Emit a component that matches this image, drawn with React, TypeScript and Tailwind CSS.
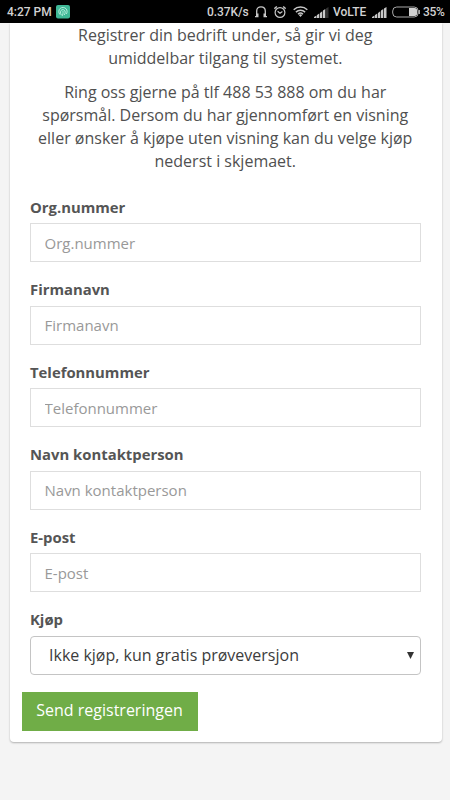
import React from "react";

const fields = [
  "Org.nummer",
  "Firmanavn",
  "Telefonnummer",
  "Navn kontaktperson",
  "E-post",
];

function Signal({ last }: { last: string }) {
  return (
    <svg className="block h-[11px] w-[15px]" viewBox="0 0 15 11">
      <path fill="#c8c8c8" d="M0 11V10l2.500-1.500V11zM3 8l2.300-1.500V11H3zM6 6l2.300-1.800V11H6zM9 3.500L11.300 2v9H9z" />
      <path fill={last} d="M12 1.500L14.500 0v11H12z" />
    </svg>
  );
}

function StatusBar() {
  return (
    <div className="flex h-[23px] items-center bg-black px-[7px] font-['Roboto',sans-serif] text-[12px] leading-[23px] font-medium text-[#d2d2d2]">
      <span className="w-[49px] shrink-0 pt-px whitespace-nowrap">4:27 PM</span>
      <svg className="h-[14px] w-[14px] shrink-0" viewBox="0 0 14 14" fill="none">
        <rect width="14" height="13.500" rx="2" fill="#3fb896" />
        <g stroke="#c4f2e4" strokeWidth="0.9" strokeLinecap="round">
          <path d="M3.600 9.200C2.300 7.500 2.600 4.700 4.200 3.400c1.700-1.400 4.500-1.200 5.900.4 1.200 1.400 1.300 3.400.5 4.800" />
          <path d="M5.100 9.600C4 7.800 4.300 5.500 5.900 4.800c1.700-.7 3.400.6 3.300 2.400 0 1-.3 1.800-.8 2.500" />
          <path d="M7 6.500c.3 1.500-.1 3-.8 4.200" />
        </g>
      </svg>
      <span className="ml-[137px] w-[42px] shrink-0 pt-px tracking-[-0.1px] whitespace-nowrap">0.37K/s</span>
      <svg className="ml-[6px] h-[12px] w-[12px] shrink-0" viewBox="0 0 12 12" fill="none">
        <path stroke="#c8c8c8" strokeWidth="1.300" d="M1.700 9V5C1.700 2.300 3.400.8 6 .8s4.300 1.500 4.300 4.200v4" />
        <path fill="#c8c8c8" d="M0 11.300V10h1V7.500h2.500v3.800zM12 11.300V10h-1V7.500H8.500v3.800z" />
      </svg>
      <svg className="ml-[7px] h-[12px] w-[12px] shrink-0" viewBox="0 0 12 12" fill="none" stroke="#c8c8c8">
        <circle cx="6" cy="6.500" r="4.900" strokeWidth="1.200" />
        <path strokeWidth="1.400" d="M.3 2.700L2.800.5M11.700 2.700L9.200.5" />
        <path strokeWidth="1.200" d="M3.600 5.200L6 7.200l2.400-1.700" />
      </svg>
      <svg className="ml-[7px] h-[11px] w-[15px] shrink-0" viewBox="0 0 15 11" fill="none" stroke="#c8c8c8" strokeWidth="1.500">
        <path d="M.7 3.800C4.500.2 10.500.2 14.300 3.800M2.900 6.100c2.600-2.400 6.600-2.400 9.200 0M5 8.200c1.400-1.300 3.600-1.300 5 0" />
        <path fill="#c8c8c8" stroke="none" d="M5.800 9L7.500 11l1.700-2c-1-.9-2.400-.9-3.400 0z" />
      </svg>
      <div className="mt-px ml-[6px] w-[15px] shrink-0">
        <Signal last="#333" />
      </div>
      <span className="ml-[4px] w-[33px] shrink-0 pt-px whitespace-nowrap">VoLTE</span>
      <div className="mt-px ml-[6px] w-[15px] shrink-0">
        <Signal last="#c8c8c8" />
      </div>
      <svg className="ml-[5px] h-[12px] w-[28px] shrink-0" viewBox="0 0 28 12" fill="none">
        <rect x=".7" y="1" width="25.500" height="10" rx="4" stroke="#a8a8a8" />
        <path fill="#d2d2d2" d="M17 2h5.500A2.700 2.700 0 0 1 25.200 4.700v2.600a2.700 2.700 0 0 1-2.700 2.700H17z" />
        <path fill="#a8a8a8" d="M26.500 4H28v4h-1.500z" />
      </svg>
      <span className="ml-[3px] pt-px tracking-[-0.3px] whitespace-nowrap">35%</span>
    </div>
  );
}

function Label({ text }: { text: string }) {
  return (
    <label className="block h-[27.500px] text-[14.850px] leading-[22px] font-bold text-[#555]">
      {text}
    </label>
  );
}

function Field({ label }: { label: string }) {
  return (
    <div className="mb-[16px]">
      <Label text={label} />
      <input
        className="block h-[39px] w-full border border-[#dedede] bg-white px-[13.500px] text-[15px] text-[#777] placeholder:text-[#999] placeholder:opacity-100"
        placeholder={label}
      />
    </div>
  );
}

function App() {
  return (
    <div className="h-[800px] overflow-hidden bg-[#f4f4f4] font-['Open_Sans',sans-serif]">
      <StatusBar />
      <div className="mr-[8.500px] ml-[10px] h-[719px] rounded-b-[4px] bg-white pt-px pr-[21px] pl-[20px] shadow-[0_1px_2px_rgba(0,0,0,0.28)]">
        <div className="text-center text-[16px] leading-[23px] whitespace-nowrap text-[#505050]">
          <p>
            Registrer din bedrift under, så gir vi deg
            <br />
            umiddelbar tilgang til systemet.
          </p>
          <p className="mt-[11px]">
            Ring oss gjerne på tlf 488 53 888 om du har
            <br />
            spørsmål. Dersom du har gjennomført en visning
            <br />
            eller ønsker å kjøpe uten visning kan du velge kjøp
            <br />
            nederst i skjemaet.
          </p>
        </div>
        <form className="mt-[22.500px]">
          {fields.map((label) => (
            <Field key={label} label={label} />
          ))}
          <Label text="Kjøp" />
          <div className="flex h-[39px] items-center justify-between rounded-[4px] border border-[#c4c4c4] pr-[6px] pl-[18px] text-[16px] text-[#3c3c3c]">
            <span>Ikke kjøp, kun gratis prøveversjon</span>
            <svg className="h-[7px] w-[7px]" viewBox="0 0 7 7">
              <path fill="#333" d="M0 0h7L3.500 7z" />
            </svg>
          </div>
          <button
            type="button"
            className="mt-[17px] -ml-[8px] block h-[39px] w-[176px] bg-[#70ad47] pr-px pb-[2px] text-[16px] whitespace-nowrap text-white"
          >
            Send registreringen
          </button>
        </form>
      </div>
    </div>
  );
}

export default App;
